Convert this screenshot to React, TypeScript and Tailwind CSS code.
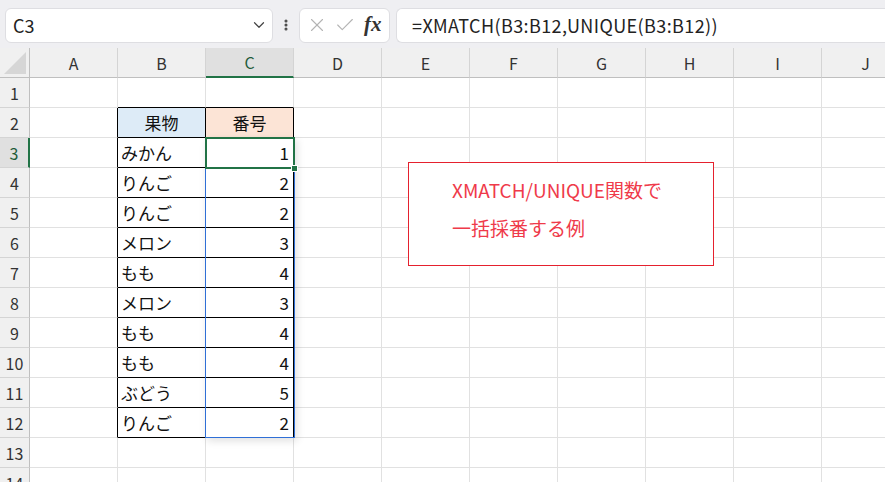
import { Check, ChevronDown, EllipsisVertical, X } from 'lucide-react';

const cols = ['A', 'B', 'C', 'D', 'E', 'F', 'G', 'H', 'I', 'J'];
const rows = Array.from({ length: 14 }, (_, i) => i + 1);

const fruits: [string, number][] = [
  ['みかん', 1],
  ['りんご', 2],
  ['りんご', 2],
  ['メロン', 3],
  ['もも', 4],
  ['メロン', 3],
  ['もも', 4],
  ['もも', 4],
  ['ぶどう', 5],
  ['りんご', 2],
];

const font = { fontFamily: '"Noto Sans CJK JP", "Noto Sans", sans-serif' };

function Cell({ r, c }: { r: number; c: number }) {
  const inTable = r >= 2 && r <= 12 && (c === 1 || c === 2);
  const topEdge = r === 1 && (c === 1 || c === 2);
  const leftEdge = r >= 2 && r <= 12 && c === 0;

  let cls = 'h-[30px] border-r border-b flex items-center text-[17px] text-[#111] overflow-hidden whitespace-nowrap';
  cls += inTable ? ' border-black' : ' border-[#e1e1e1]';
  if (topEdge) cls += ' border-b-black';
  if (leftEdge) cls += ' border-r-black';

  let content: React.ReactNode = null;
  if (r === 2 && c === 1) {
    cls += ' bg-[#ddebf7] justify-center';
    content = '果物';
  } else if (r === 2 && c === 2) {
    cls += ' bg-[#fce4d6] justify-center';
    content = '番号';
  } else if (inTable && c === 1) {
    cls += ' pl-[3px]';
    content = fruits[r - 3][0];
  } else if (inTable && c === 2) {
    cls += ' justify-end pr-[4px]';
    content = fruits[r - 3][1];
  }
  return <div className={cls}>{content}</div>;
}

export default function App() {
  return (
    <div className="relative w-[885px] h-[482px] overflow-hidden bg-white" style={font}>
      {/* formula bar */}
      <div className="flex h-[48px] items-center gap-[6px] bg-[#efeff2] pl-[5px] pt-[2px]">
        <div className="flex h-[35px] w-[268px] items-center justify-between rounded-[6px] border border-[#dedee2] bg-white pl-[7px] pr-[4px]">
          <span className="text-[18px] text-[#222]">C3</span>
          <ChevronDown className="h-[18px] w-[18px] text-[#444]" strokeWidth={1.6} />
        </div>
        <EllipsisVertical className="h-[18px] w-[14px] text-[#444]" strokeWidth={3.2} />
        <div className="flex h-[35px] w-[91px] items-center gap-[6px] rounded-[6px] border border-[#dedee2] bg-white pl-[6px]">
          <X className="h-[22px] w-[22px] text-[#b4b4b4]" strokeWidth={1.2} />
          <Check className="h-[22px] w-[22px] text-[#b4b4b4]" strokeWidth={1.2} />
          <span className="ml-[2px] text-[21px] font-bold italic text-[#333]" style={{ fontFamily: '"Liberation Serif", serif' }}>
            fx
          </span>
        </div>
        <div className="flex h-[35px] flex-1 items-center rounded-l-[6px] border border-r-0 border-[#dedee2] bg-white pl-[15px]">
          <span className="text-[18px] tracking-[0.4px] text-[#222]">=XMATCH(B3:B12,UNIQUE(B3:B12))</span>
        </div>
      </div>

      {/* sheet */}
      <div className="grid w-[910px] grid-cols-[30px_repeat(10,88px)]">
        <div className="relative h-[30px] border-r border-b border-[#bfbfbf] bg-[#f0f0f0]">
          <svg className="absolute bottom-[3px] right-[3px]" width="22" height="22" viewBox="0 0 22 22">
            <polygon points="22,0 22,22 0,22" fill="#d6d6d6" />
          </svg>
        </div>
        {cols.map((c) => (
          <div
            key={c}
            className={
              c === 'C'
                ? 'flex h-[30px] items-center justify-center border-r border-b-2 border-r-[#d4d4d4] border-b-[#217346] bg-[#e0e0e0] text-[16px] text-[#1f5c3a]'
                : 'flex h-[30px] items-center justify-center border-r border-b border-r-[#d4d4d4] border-b-[#bfbfbf] bg-[#f0f0f0] text-[16px] text-[#333]'
            }
          >
            {c}
          </div>
        ))}
        {rows.map((r) => (
          <div key={r} className="contents">
            <div
              className={
                r === 3
                  ? 'flex h-[30px] items-center justify-center border-r-2 border-b border-r-[#217346] border-b-[#d4d4d4] bg-[#e0e0e0] text-[16px] text-[#1f5c3a]'
                  : 'flex h-[30px] items-center justify-center border-r border-b border-r-[#bfbfbf] border-b-[#d4d4d4] bg-[#f0f0f0] text-[16px] text-[#333]'
              }
            >
              {r}
            </div>
            {cols.map((_, c) => (
              <Cell key={c} r={r} c={c} />
            ))}
          </div>
        ))}
      </div>

      {/* range highlight C3:C12 */}
      <div className="pointer-events-none absolute z-10 left-[205px] top-[137px] h-[301px] w-[90px] border border-[#2f6fd6] shadow-[2px_3px_8px_rgba(0,0,0,0.12)]" />
      {/* active cell C3 */}
      <div className="pointer-events-none absolute z-10 left-[205px] top-[137px] h-[32px] w-[90px] border-2 border-[#217346]" />
      <div className="pointer-events-none absolute z-10 left-[291px] top-[165px] h-[7px] w-[7px] border border-white bg-[#217346]" />

      {/* text box shape */}
      <div className="absolute left-[408px] top-[162px] h-[104px] w-[306px] border border-[#e5212e] bg-white pl-[43px] pt-[8px] text-[19px] leading-[38px] text-[#ef3a4a]">
        <div>XMATCH/UNIQUE関数で</div>
        <div>一括採番する例</div>
      </div>
    </div>
  );
}
